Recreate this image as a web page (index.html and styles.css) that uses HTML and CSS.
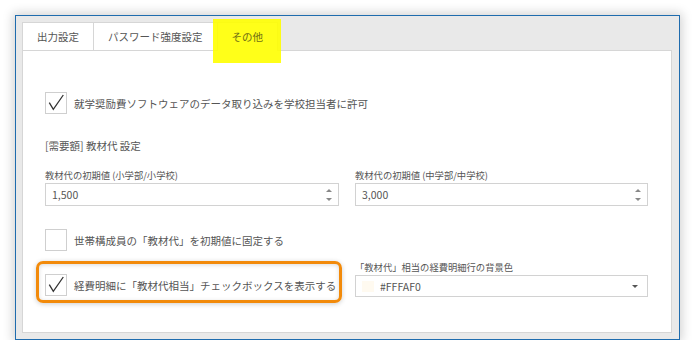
FILE: index.html
```html
<!DOCTYPE html>
<html lang="ja">
<head>
    <meta charset="UTF-8">
    <title>その他設定</title>
    <link rel="stylesheet" href="styles.css">
</head>
<body>
    <div class="window">
        <div class="tabs">
            <div class="tab">出力設定</div>
            <div class="tab">パスワード強度設定</div>
            <div class="tab active"><span class="mark"></span><span class="tab-text">その他</span></div>
        </div>
        <div class="panel">
            <label class="check first">
                <span class="box"><svg width="22" height="22" viewBox="0 0 22 22"><polyline points="4.3,10.7 8.3,17.3 18.3,3" /></svg></span>
                <span>就学奨励費ソフトウェアのデータ取り込みを学校担当者に許可</span>
            </label>
            <div class="heading">[需要額] 教材代 設定</div>
            <div class="cols">
                <div class="field">
                    <div class="caption">教材代の初期値 (小学部/小学校)</div>
                    <div class="input">1,500<span class="spin"><i class="up"></i><i class="down"></i></span></div>
                </div>
                <div class="field">
                    <div class="caption">教材代の初期値 (中学部/中学校)</div>
                    <div class="input">3,000<span class="spin"><i class="up"></i><i class="down"></i></span></div>
                </div>
                <label class="check second">
                    <span class="box"></span>
                    <span>世帯構成員の「教材代」を初期値に固定する</span>
                </label>
                <div></div>
                <div class="third">
                    <label class="check">
                        <span class="box"><svg width="22" height="22" viewBox="0 0 22 22"><polyline points="4.3,10.7 8.3,17.3 18.3,3" /></svg></span>
                        <span>経費明細に「教材代相当」チェックボックスを表示する</span>
                    </label>
                    <span class="outline"></span>
                </div>
                <div class="field color-field">
                    <div class="caption">「教材代」相当の経費明細行の背景色</div>
                    <div class="input select"><span class="swatch"></span>#FFFAF0<i class="caret"></i></div>
                </div>
            </div>
        </div>
    </div>
</body>
</html>
```

FILE: styles.css
```css
body {
    margin: 0;
    padding: 15px 0 0 15px;
    background: #fff;
    font-family: "Noto Sans CJK JP", "Noto Sans", sans-serif;
    color: #555;
}

.window {
    width: 665px;
    height: 325px;
    box-sizing: border-box;
    border: 1px solid #1f6cae;
    background: #e9e9e9;
    padding: 6px 7px 6px 6px;
    box-shadow: 0 0 10px 2px rgba(0, 0, 0, .18);
    display: flex;
    flex-direction: column;
}

.tabs {
    display: flex;
    height: 28px;
}

.tab {
    position: relative;
    box-sizing: border-box;
    height: 28px;
    padding: 0 14px;
    border: 1px solid #d6d6d6;
    border-bottom: none;
    background: #fff;
    font-size: 10.5px;
    line-height: 27px;
    white-space: nowrap;
}

.tab + .tab {
    margin-left: -1px;
}

.tab.active {
    height: 29px;
    margin-bottom: -1px;
    z-index: 1;
}

.tab-text {
    position: relative;
    color: #6e6e14;
}

.mark {
    position: absolute;
    left: -5px;
    right: -4px;
    top: -4px;
    bottom: -12px;
    background: rgba(255, 255, 0, .9);
}

.panel {
    flex: 1;
    border: 1px solid #d6d6d6;
    background: #fff;
    padding: 0 23px 0 22px;
}

.check {
    display: flex;
    align-items: center;
    gap: 7px;
    font-size: 10.5px;
    white-space: nowrap;
}

.check.first {
    margin-top: 41px;
}

.box {
    width: 22px;
    height: 22px;
    box-sizing: border-box;
    border: 1px solid #cfcfcf;
    background: #fff;
    flex-shrink: 0;
    position: relative;
}

.box svg {
    position: absolute;
    left: -1px;
    top: -1px;
}

.box polyline {
    fill: none;
    stroke: #333;
    stroke-width: 1.3;
}

.heading {
    margin-top: 24px;
    font-size: 10.5px;
    line-height: 16px;
}

.cols {
    display: grid;
    grid-template-columns: 294px 293px;
    column-gap: 16px;
    align-items: start;
}

.field {
    margin-top: 13px;
}

.caption {
    font-size: 9.3px;
    line-height: 16px;
    white-space: nowrap;
}

.input {
    position: relative;
    height: 23px;
    box-sizing: border-box;
    border: 1px solid #d2d2d2;
    padding-left: 6px;
    font-size: 10.5px;
    line-height: 21px;
}

.spin .up,
.spin .down {
    position: absolute;
    right: 6px;
    width: 0;
    height: 0;
    border-left: 3px solid transparent;
    border-right: 3px solid transparent;
}

.spin .up {
    top: 5px;
    border-bottom: 3px solid #888;
}

.spin .down {
    top: 14px;
    border-top: 3px solid #888;
}

.check.second {
    margin-top: 23px;
}

.third {
    position: relative;
    margin-top: 23px;
}

.outline {
    position: absolute;
    left: -9px;
    top: -13px;
    right: -3px;
    bottom: -7px;
    border: 3px solid #f28a0a;
    border-radius: 7px;
    box-shadow: 0 1px 5px rgba(0, 0, 0, .2), inset 0 1px 4px rgba(0, 0, 0, .15);
}

.color-field {
    margin-top: 8px;
}

.select {
    height: 22px;
    display: flex;
    align-items: center;
    padding-left: 6px;
    color: #555;
}

.swatch {
    width: 12px;
    height: 11px;
    background: #fffaf0;
    margin-right: 6px;
}

.caret {
    position: absolute;
    right: 9px;
    top: 9px;
    border-left: 3.5px solid transparent;
    border-right: 3.5px solid transparent;
    border-top: 3.5px solid #555;
}
```
